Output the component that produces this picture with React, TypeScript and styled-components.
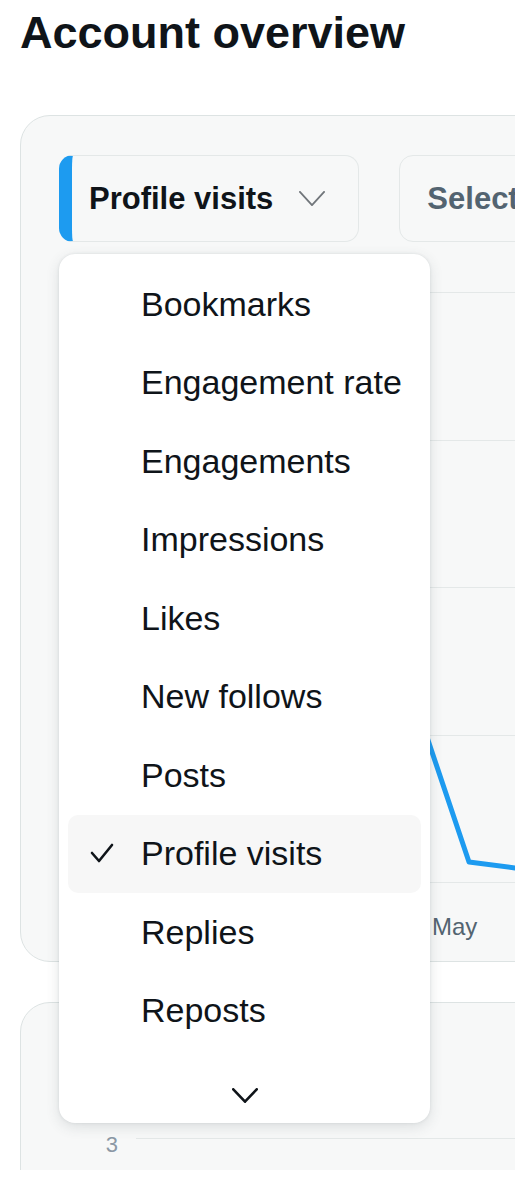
import styled, { createGlobalStyle } from 'styled-components';

/* —— tokens —— */
const ink      = '#0f1419';
const muted    = '#536471';
const faint    = '#8b98a5';
const blue     = '#1d9bf0';
const cardBg   = '#f7f8f8';
const line     = '#e4e8e8';
const cardLine = '#dde3e3';

const metrics = [
  'Bookmarks',
  'Engagement rate',
  'Engagements',
  'Impressions',
  'Likes',
  'New follows',
  'Posts',
  'Profile visits',
  'Replies',
  'Reposts',
];
const selected = 'Profile visits';

const Global = createGlobalStyle`
  html, body { margin: 0; background: #fff; }
  body { font-family: "Liberation Sans", Arial, sans-serif; color: ${ink}; }
  * { box-sizing: border-box; }
`;

/* —— page frame (the captured area) —— */
const Frame = styled.div`
  position: relative;
  width: 515px;
  height: 1170px;
  overflow: hidden;
`;

const Title = styled.h1`
  margin: 0;
  padding: 10px 0 0 20px;
  font-size: 45px;
  line-height: 45px;
  font-weight: 700;
  color: ${ink};
  white-space: nowrap;
`;

/* —— cards —— */
const Card = styled.section<{ $top: number }>`
  position: relative;
  width: 720px;
  margin: ${p => p.$top}px 0 0 20px;
  background: ${cardBg};
  border: 1px solid ${cardLine};
  border-radius: 30px;
`;

const OverviewBody = styled.div`
  padding: 39px 38px 19px;
`;

const Toolbar = styled.div`
  display: flex;
  gap: 40px;
  height: 87px;
`;

const MetricButton = styled.button<{ $accent?: boolean }>`
  flex-shrink: 0;
  display: flex;
  align-items: center;
  gap: 26px;
  height: 87px;
  padding: 0 33px 0 ${p => (p.$accent ? 17 : 27)}px;
  background: ${cardBg};
  border: 1px solid ${line};
  border-left: ${p => (p.$accent ? `13px solid ${blue}` : `1px solid ${line}`)};
  border-radius: 14px;
  font-family: inherit;
  font-size: 31px;
  font-weight: 700;
  color: ${p => (p.$accent ? ink : muted)};
  white-space: nowrap;
`;

/* —— chart —— */
const Chart = styled.div`
  position: relative;
  padding-top: 50px;
`;

const GridRow = styled.div`
  height: 147.5px;
  margin-left: 77px;
  border-top: 1px solid ${line};
`;

const AxisRow = styled.div`
  height: 60px;
  margin-left: 77px;
  padding: 32px 0 0 296px;
  border-top: 1px solid ${line};
`;

const AxisLabel = styled.span`
  display: block;
  font-size: 24px;
  line-height: 24px;
  color: ${muted};
`;

const LinePlot = styled.svg`
  position: absolute;
  inset: 0;
  width: 100%;
  height: 100%;
  overflow: visible;
  pointer-events: none;
`;

/* —— second card —— */
const SecondBody = styled.div`
  height: 300px;
  padding: 131px 38px 0;
`;

const YRow = styled.div`
  display: flex;
  gap: 18px;
`;

const YLabel = styled.span`
  width: 59px;
  text-align: right;
  font-size: 22px;
  line-height: 22px;
  color: ${faint};
`;

const YLine = styled.div`
  flex: 1;
  margin-top: 4px;
  border-top: 1px solid ${line};
`;

/* —— dropdown —— */
const Menu = styled.ul`
  position: absolute;
  left: 59px;
  top: 254px;
  z-index: 5;
  width: 371px;
  margin: 0;
  padding: 11px 0 0;
  list-style: none;
  background: #fff;
  border-radius: 16px;
  box-shadow: 0 4px 14px rgba(60, 70, 80, 0.14), 0 0 3px rgba(60, 70, 80, 0.12);
`;

const Item = styled.li<{ $active?: boolean }>`
  position: relative;
  display: flex;
  align-items: center;
  height: 78.5px;
  margin: 0 9px;
  padding-left: 73px;
  border-radius: 10px;
  background: ${p => (p.$active ? '#f7f7f7' : 'transparent')};
  font-size: 34px;
  color: ${ink};
  white-space: nowrap;
`;

const Check = styled.svg`
  position: absolute;
  left: 22px;
  top: 28px;
`;

const MoreRow = styled.li`
  display: flex;
  justify-content: center;
  height: 73px;
  padding-top: 38px;
`;

const Chevron = ({ w, h, color, sw }: { w: number; h: number; color: string; sw: number }) => (
  <svg width={w} height={h} viewBox={`0 0 ${w} ${h}`} fill="none">
    <polyline
      points={`${sw / 2},${sw / 2} ${w / 2},${h - sw / 2} ${w - sw / 2},${sw / 2}`}
      stroke={color}
      strokeWidth={sw}
      strokeLinecap="round"
      strokeLinejoin="round"
    />
  </svg>
);

export default function App() {
  return (
    <Frame>
      <Global />
      <Title>Account overview</Title>

      <Card $top={60}>
        <OverviewBody>
          <Toolbar>
            <MetricButton $accent>
              Profile visits
              <Chevron w={26} h={15} color="#71767b" sw={1.8} />
            </MetricButton>
            <MetricButton>Select to compare</MetricButton>
          </Toolbar>

          <Chart>
            <GridRow />
            <GridRow />
            <GridRow />
            <GridRow />
            <AxisRow>
              <AxisLabel>May</AxisLabel>
            </AxisRow>
            {/* coords relative to chart top-left */}
            <LinePlot>
              <polyline
                points="300,293 410,620 456,626 560,631"
                fill="none"
                stroke={blue}
                strokeWidth={5}
                strokeLinejoin="round"
              />
            </LinePlot>
          </Chart>
        </OverviewBody>
      </Card>

      <Card $top={40}>
        <SecondBody>
          <YRow>
            <YLabel>3</YLabel>
            <YLine />
          </YRow>
        </SecondBody>
      </Card>

      <Menu>
        {metrics.map(m => (
          <Item key={m} $active={m === selected}>
            {m === selected && (
              <Check width="24" height="22" viewBox="0 0 24 22" fill="none">
                <polyline
                  points="2,10 9,18 22,2"
                  stroke={ink}
                  strokeWidth={2.6}
                  strokeLinecap="round"
                  strokeLinejoin="round"
                />
              </Check>
            )}
            {m}
          </Item>
        ))}
        <MoreRow>
          <Chevron w={26} h={15} color={ink} sw={2.6} />
        </MoreRow>
      </Menu>
    </Frame>
  );
}
